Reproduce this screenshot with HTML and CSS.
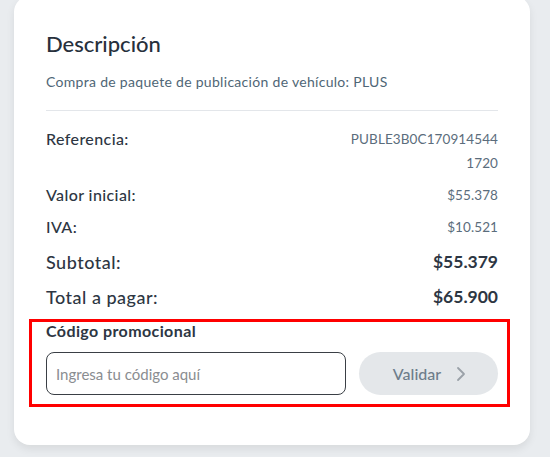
FILE: index.html
```html
<!DOCTYPE html>
<html lang="es">
<head>
<meta charset="utf-8">
<link rel="stylesheet" href="styles.css">
</head>
<body>
<div class="card">
  <h2 class="title">Descripción</h2>
  <p class="subtitle">Compra de paquete de publicación de vehículo: PLUS</p>
  <hr class="divider">
  <div class="row row-ref">
    <span class="label">Referencia:</span>
    <span class="value ref">PUBLE3B0C170914544<br>1720</span>
  </div>
  <div class="row">
    <span class="label">Valor inicial:</span>
    <span class="value">$55.378</span>
  </div>
  <div class="row">
    <span class="label">IVA:</span>
    <span class="value">$10.521</span>
  </div>
  <div class="row row-big">
    <span class="label">Subtotal:</span>
    <span class="value strong">$55.379</span>
  </div>
  <div class="row row-big">
    <span class="label">Total a pagar:</span>
    <span class="value strong">$65.900</span>
  </div>
  <div class="promo">
    <div class="promo-label">Código promocional</div>
    <div class="promo-form">
      <input class="promo-input" type="text" placeholder="Ingresa tu código aquí">
      <button class="promo-btn" type="button">Validar
        <svg class="chev" width="10" height="16" viewBox="0 0 10 16"><path d="M2 2 L8 8 L2 14" fill="none" stroke="#9aa1a8" stroke-width="1.8" stroke-linecap="round" stroke-linejoin="round"/></svg>
      </button>
    </div>
  </div>
</div>
</body>
</html>
```
FILE: styles.css
```css
* { box-sizing: border-box; }
body {
  margin: 0;
  background: #e9ecef;
  font-family: Lato, "Noto Sans", sans-serif;
  height: 457px;
  overflow: hidden;
}
.card {
  margin: -4px 20px 0 14px;
  background: #fff;
  border-radius: 16px;
  box-shadow: 0 4px 8px rgba(0, 0, 0, 0.08);
  padding: 30px 32px 38px 32px;
}
.title {
  margin: 0;
  font-size: 22px;
  line-height: 36px;
  font-weight: 500;
  color: #27303c;
}
.subtitle {
  margin: 10px 0 0;
  font-size: 14px;
  letter-spacing: 0.3px;
  line-height: 20px;
  color: #4f6676;
}
.divider {
  margin: 18px 0 0;
  border: 0;
  border-top: 1px solid #e3e6ea;
  height: 0;
}
.row {
  display: flex;
  justify-content: space-between;
  align-items: flex-start;
  margin-top: 8px;
}
.row-ref { margin-top: 16px; }
.row-big { margin-top: 11px; }
.label {
  font-size: 16px;
  letter-spacing: 0.4px;
  line-height: 24px;
  font-weight: 500;
  color: #2d3643;
}
.row-big .label { font-size: 18px; letter-spacing: 0.5px; }
.value {
  font-size: 13.5px;
  letter-spacing: 0.1px;
  line-height: 24px;
  color: #5b6d7c;
  text-align: right;
}
.value.strong {
  font-size: 17.5px;
  letter-spacing: 0;
  font-weight: 700;
  color: #2d3643;
}
.promo {
  margin: 10px -12px 0 -17px;
  border: 3px solid #ff0000;
  padding: 0 9px 9px 14px;
}
.promo-label {
  font-size: 16px;
  letter-spacing: 0.4px;
  line-height: 18px;
  font-weight: 700;
  color: #2d3643;
}
.promo-form {
  display: flex;
  gap: 13px;
  margin-top: 12px;
}
.promo-input {
  flex: 1;
  height: 43px;
  border: 1px solid #3a3f45;
  border-radius: 8px;
  padding: 0 9px;
  font-family: inherit;
  font-size: 15px;
  color: #333;
  outline: none;
}
.promo-input::placeholder { color: #8a8d91; }
.promo-btn {
  width: 139px;
  height: 43px;
  border: 0;
  border-radius: 22px;
  background: #e4e7ea;
  color: #6e7d8a;
  font-family: inherit;
  font-size: 16px;
  font-weight: 500;
  display: flex;
  align-items: center;
  justify-content: center;
  gap: 15px;
  padding: 0 0 0 2px;
}
.chev { display: block; }
```
